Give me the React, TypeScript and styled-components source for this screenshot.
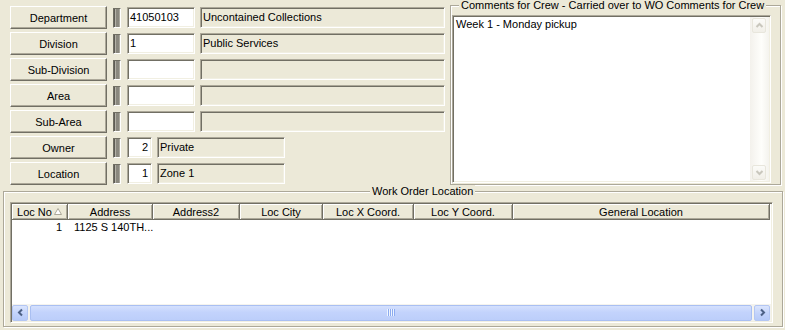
import React from 'react'
import styled, { createGlobalStyle, css } from 'styled-components'

const GlobalStyle = createGlobalStyle`
  html, body {
    margin: 0;
    padding: 0;
    background: #ece9d8;
  }
  body {
    font-family: "Liberation Sans", Arial, sans-serif;
    font-size: 11px;
    color: #000;
  }
`

const sunken = css`
  border: 1px solid;
  border-color: #aca899 #fff #fff #aca899;
  box-shadow: inset 1px 1px 0 #716f64, inset -1px -1px 0 #f1efe2;
`

const etched = css`
  border: 1px solid #aca899;
  box-shadow: inset 1px 1px 0 #fff, 1px 1px 0 #fff;
`

const Window = styled.div`
  width: 785px;
  height: 330px;
  overflow: hidden;
  display: flex;
  flex-direction: column;
`

const Top = styled.div`
  display: flex;
  align-items: flex-start;
  height: 185px;
`

const Form = styled.div`
  display: flex;
  flex-direction: column;
  gap: 3px;
  padding: 6px 0 0 10px;
  width: 435px;
`

const Row = styled.div`
  display: flex;
  align-items: center;
  height: 23px;
`

const LookupButton = styled.button`
  box-sizing: border-box;
  width: 97px;
  height: 23px;
  margin: 0 6px 0 0;
  padding: 0;
  font: inherit;
  color: #000;
  background: #ece9d8;
  border: 1px solid;
  border-color: #fff #716f64 #716f64 #fff;
  box-shadow: inset -1px -1px 0 #aca899;
  text-align: center;
`

const Indicator = styled.span`
  box-sizing: border-box;
  width: 8px;
  height: 20px;
  margin-right: 6px;
  border: 1px solid;
  border-color: #716f64 #fff #fff #716f64;
  background: linear-gradient(
    to right,
    #5e5c55 0 1px,
    #b4b2a8 1px 2px,
    #8a887f 2px 5px,
    #a9a79d 5px
  );
`

const Field = styled.div<{ $short?: boolean; $white?: boolean; $w: number }>`
  box-sizing: border-box;
  width: ${p => p.$w}px;
  height: 21px;
  line-height: 19px;
  padding: 0 ${p => (p.$short ? 3 : 2)}px 0 2px;
  text-align: ${p => (p.$short ? 'right' : 'left')};
  background: ${p => (p.$white ? '#fff' : '#ece9d8')};
  white-space: nowrap;
  overflow: hidden;
  ${sunken};
`

const Gap = styled.span`
  width: 5px;
`

const Group = styled.div`
  position: relative;
  box-sizing: border-box;
  ${etched};
`

const Caption = styled.span<{ $left: number }>`
  position: absolute;
  top: -7px;
  left: ${p => p.$left}px;
  padding: 0 2px;
  line-height: 13px;
  background: #ece9d8;
  white-space: nowrap;
`

const CommentsGroup = styled(Group)`
  margin: 5px 0 0 5px;
  width: 331px;
  height: 180px;
  padding: 9px 0 1px 1px;
`

const Memo = styled.div`
  box-sizing: border-box;
  width: 319px;
  height: 168px;
  display: flex;
  background: #fff;
  ${sunken};
  padding: 1px;
`

const MemoText = styled.div`
  flex: 1;
  padding: 1px 2px;
  line-height: 13px;
`

const VScroll = styled.div`
  width: 16px;
  display: flex;
  flex-direction: column;
  justify-content: space-between;
  background: linear-gradient(to right, #f3f1ec, #fefefb 60%, #f4f3ee);
  padding: 1px 1px 1px 2px;
`

const ScrollBtn = styled.div<{ $blue?: boolean }>`
  box-sizing: border-box;
  width: ${p => (p.$blue ? 16 : 14)}px;
  height: ${p => (p.$blue ? 16 : 15)}px;
  display: flex;
  align-items: center;
  justify-content: center;
  border-radius: 2px;
  ${p =>
    p.$blue
      ? css`
          border: 1px solid #b3c6f3;
          background: linear-gradient(to bottom, #dbe5fd, #c4d4fb 50%, #b6caf8);
        `
      : css`
          border: 1px solid #e8e6dc;
          background: linear-gradient(to bottom, #fbfbf8, #f1efe8);
        `}
`

const LocationGroup = styled(Group)`
  margin: 6px 0 0 3px;
  width: 780px;
  height: 136px;
  padding: 10px 0 0 6px;
`

const Grid = styled.div`
  box-sizing: border-box;
  width: 763px;
  height: 121px;
  display: flex;
  flex-direction: column;
  background: #fff;
  ${sunken};
  padding: 1px;
`

const HeaderRow = styled.div`
  display: flex;
  height: 16px;
  background: #fff;
`

const HeaderCell = styled.div<{ $w: number }>`
  box-sizing: border-box;
  width: ${p => p.$w}px;
  height: 16px;
  background: #ece9d8;
  border-right: 1px solid #716f64;
  border-bottom: 1px solid #716f64;
  box-shadow: inset 1px 1px 0 #fff, inset -1px -1px 0 #aca899;
  white-space: nowrap;
  display: flex;
  align-items: center;
  justify-content: center;
  gap: 2px;
`

const Body = styled.div`
  flex: 1;
  padding-top: 1px;
`

const DataRow = styled.div`
  display: flex;
  height: 13px;
  line-height: 13px;
`

const DataCell = styled.div<{ $w: number; $right?: boolean }>`
  box-sizing: border-box;
  width: ${p => p.$w}px;
  padding: 0 6px;
  text-align: ${p => (p.$right ? 'right' : 'left')};
  white-space: nowrap;
`

const HScroll = styled.div`
  height: 17px;
  display: flex;
  align-items: center;
  gap: 2px;
  background: #f4f3ee;
  padding: 0 1px 0 0;
`

const Thumb = styled.div`
  box-sizing: border-box;
  flex: 1;
  height: 16px;
  border: 1px solid #a9bff2;
  border-radius: 2px;
  background: linear-gradient(to bottom, #d4e0fd, #c3d3fc 45%, #bccefa);
  display: flex;
  align-items: center;
  justify-content: center;
`

const Grip = styled.span`
  width: 8px;
  height: 7px;
  background: repeating-linear-gradient(
    to right,
    #eef4fe 0 1px,
    #8cabf0 1px 2px
  );
`

const rows = [
  { label: 'Department', code: '41050103', desc: 'Uncontained Collections' },
  { label: 'Division', code: '1', desc: 'Public Services' },
  { label: 'Sub-Division', code: '', desc: '' },
  { label: 'Area', code: '', desc: '' },
  { label: 'Sub-Area', code: '', desc: '' },
  { label: 'Owner', code: '2', desc: 'Private', short: true },
  { label: 'Location', code: '1', desc: 'Zone 1', short: true }
]

const columns = [
  { title: 'Loc No', w: 56 },
  { title: 'Address', w: 85 },
  { title: 'Address2', w: 87 },
  { title: 'Loc City', w: 83 },
  { title: 'Loc X Coord.', w: 91 },
  { title: 'Loc Y Coord.', w: 99 },
  { title: 'General Location', w: 257 }
]

const SortArrow = () => (
  <svg width="8" height="7" viewBox="0 0 8 7">
    <polygon points="4,0.5 7.5,6.5 0.5,6.5" fill="#fff" stroke="#aca899" />
  </svg>
)

const Chevron = ({ dir, color }: { dir: 'up' | 'down' | 'left' | 'right'; color: string }) => {
  const d = {
    up: 'M1.5 6 L4.5 3 L7.5 6',
    down: 'M1.5 3 L4.5 6 L7.5 3',
    left: 'M6 1.5 L3 4.5 L6 7.5',
    right: 'M3 1.5 L6 4.5 L3 7.5'
  }[dir]
  return (
    <svg width="9" height="9" viewBox="0 0 9 9">
      <path d={d} fill="none" stroke={color} strokeWidth="2" />
    </svg>
  )
}

export default function App() {
  return (
    <Window>
      <GlobalStyle />
      <Top>
        <Form>
          {rows.map(r => (
            <Row key={r.label}>
              <LookupButton>{r.label}</LookupButton>
              <Indicator />
              <Field $white $short={r.short} $w={r.short ? 25 : 68}>
                {r.code}
              </Field>
              <Gap />
              <Field $w={r.short ? 128 : 245}>{r.desc}</Field>
            </Row>
          ))}
        </Form>
        <CommentsGroup>
          <Caption $left={8}>
            Comments for Crew - Carried over to WO Comments for Crew
          </Caption>
          <Memo>
            <MemoText>Week 1 - Monday pickup</MemoText>
            <VScroll>
              <ScrollBtn>
                <Chevron dir="up" color="#c9c7bd" />
              </ScrollBtn>
              <ScrollBtn>
                <Chevron dir="down" color="#c9c7bd" />
              </ScrollBtn>
            </VScroll>
          </Memo>
        </CommentsGroup>
      </Top>
      <LocationGroup>
        <Caption $left={366}>Work Order Location</Caption>
        <Grid>
          <HeaderRow>
            {columns.map((c, i) => (
              <HeaderCell key={c.title} $w={c.w}>
                {c.title}
                {i === 0 && <SortArrow />}
              </HeaderCell>
            ))}
          </HeaderRow>
          <Body>
            <DataRow>
              <DataCell $w={56} $right>
                1
              </DataCell>
              <DataCell $w={85}>1125 S 140TH...</DataCell>
            </DataRow>
          </Body>
          <HScroll>
            <ScrollBtn $blue>
              <Chevron dir="left" color="#4d6185" />
            </ScrollBtn>
            <Thumb>
              <Grip />
            </Thumb>
            <ScrollBtn $blue>
              <Chevron dir="right" color="#4d6185" />
            </ScrollBtn>
          </HScroll>
        </Grid>
      </LocationGroup>
    </Window>
  )
}
